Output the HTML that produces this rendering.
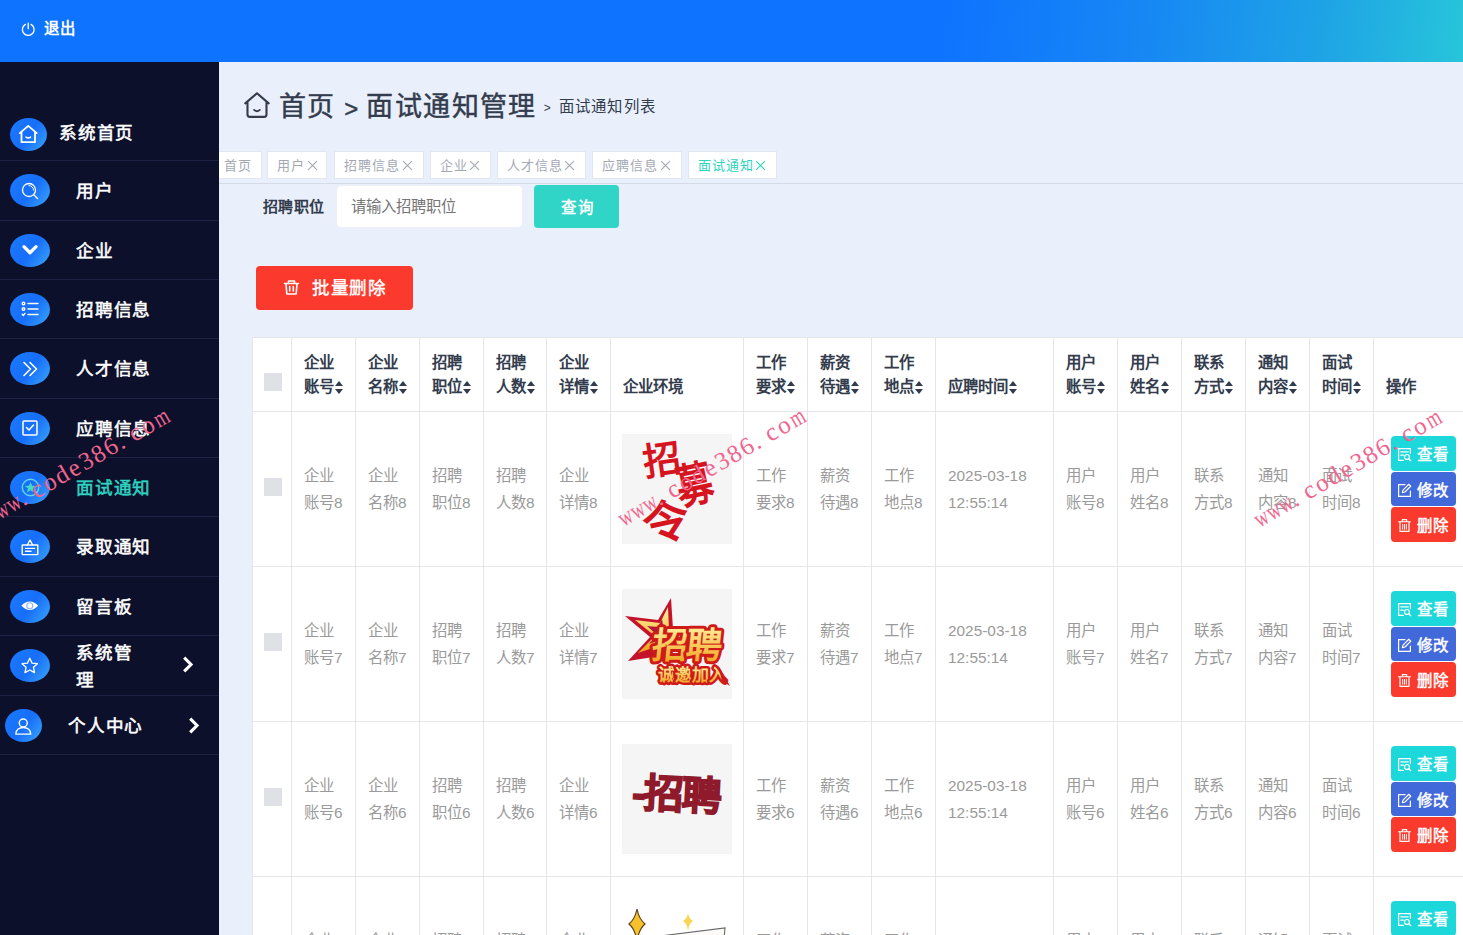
<!DOCTYPE html>
<html lang="zh-CN"><head><meta charset="utf-8"><title>面试通知管理</title>
<style>
*{box-sizing:border-box;margin:0;padding:0}
html,body{width:1463px;height:935px;overflow:hidden}
body{font-family:"Liberation Sans",sans-serif;background:#eaf0fb;color:#333c4d;position:relative}
.hdr{position:absolute;left:0;top:0;width:1463px;height:62px;background:linear-gradient(97deg,#0e73ff 0%,#0e73ff 64%,#1787f4 78%,#1ea3e6 90%,#27c5da 100%);}
.logout{position:absolute;left:22px;top:18px;color:#fff;font-size:15.4px;font-weight:bold;line-height:22px;letter-spacing:1px;display:flex;align-items:center}
.logout svg{margin-right:8px;margin-left:-1px}
.side{position:absolute;left:0;top:62px;width:219px;height:873px;background:#0c102b}
.mi{position:absolute;left:0;width:219px;height:59.33px;border-top:1px solid #1d2142;color:#fff;font-size:17.6px;font-weight:normal;-webkit-text-stroke:0.55px currentColor;letter-spacing:0.8px}
.mi .ic{position:absolute;left:10px;top:13px;width:40px;height:33px;border-radius:50%;background:linear-gradient(125deg,#1b7aff 0%,#176ef9 52%,#3ba6fb 100%);display:flex;align-items:center;justify-content:center}
.mi .tx{position:absolute;left:76px;top:1px;line-height:59px;white-space:nowrap}
.mi.on .tx{color:#2fd3c1}
.mi .ar{position:absolute;right:25px;top:21px}
.main{position:absolute;left:219px;top:62px;width:1244px;height:873px;background:#eaf0fb;overflow:hidden}
.bc{position:absolute;left:25px;top:25px;height:36px;display:flex;align-items:center;white-space:nowrap;color:#333c4d}
.bc .big{font-size:27px;letter-spacing:1.4px;line-height:36px;font-weight:normal;-webkit-text-stroke:0.45px currentColor;padding-top:4px}
.bc .sm{font-size:15.4px;letter-spacing:1.15px;margin-left:7px;padding-top:0}
.tabs{position:absolute;left:0;top:89px;height:28px;white-space:nowrap}
.tab{position:absolute;top:0;height:28px;background:#fff;border:1px solid #e2e6ee;color:#a3a8b3;font-size:13px;line-height:28px;letter-spacing:1px;padding:0 0 0 9px;white-space:nowrap}
.tab.on{color:#2fd3c1}
.tabline{position:absolute;left:0;top:121px;width:1244px;height:1px;background:#d5dbe8}
.lbl{position:absolute;left:44px;top:124px;height:42px;line-height:42px;font-size:15px;font-weight:bold;color:#333c4d;letter-spacing:0.3px}
.inp{position:absolute;left:117px;top:123px;width:187px;height:42.5px;border-radius:5px;background:#fff;border:1px solid #eef0f5;color:#757575;font-size:15.4px;line-height:41.5px;padding-left:13.5px}
.qbtn{position:absolute;left:314.5px;top:122.5px;width:85px;height:43.5px;border-radius:4px;background:#30d5c8;color:#fff;font-size:15.4px;line-height:45.5px;text-align:center;letter-spacing:2px;padding-left:3px;font-weight:normal;-webkit-text-stroke:0.5px #fff}
.del{position:absolute;left:37px;top:204px;width:157px;height:44px;border-radius:4px;background:#fb3a2d;color:#fff;font-size:17.6px;line-height:44px;letter-spacing:0.6px;display:flex;align-items:center;padding:0.6px 0 0 27px;-webkit-text-stroke:0.4px #fff}
.del svg{margin-right:12px;margin-top:-1px}
table{position:absolute;left:33px;top:275px;border-collapse:collapse;table-layout:fixed;background:#fff;width:1241px}
td,th{border:1px solid #e4e6e9;vertical-align:middle;text-align:left;padding:0 0 0 12px;overflow:hidden}
th{height:74px;font-size:15.4px;line-height:24.5px;color:#333c4d;font-weight:bold;vertical-align:bottom;padding-bottom:11.25px}
td{height:155px;font-size:15.4px;line-height:27px;color:#9a9a9a}
.cb{display:block;width:18px;height:18px;background:#dfe1e6;margin-left:0}
.srt{display:inline-block;width:9.8px;height:12.6px;vertical-align:-1.5px;position:relative;margin-left:0.5px}
.srt:before,.srt:after{content:"";position:absolute;left:0;border-left:4.9px solid transparent;border-right:4.9px solid transparent}
.srt:before{top:0;border-bottom:5.8px solid #333c4d}
.srt:after{bottom:0;border-top:5.8px solid #333c4d}
.img{display:block;width:110px;height:110px;background:#f5f5f5;position:relative;overflow:hidden}
.ab{display:flex;align-items:center;width:65px;height:34.4px;border-radius:4px;color:#fff;font-size:15.4px;font-weight:normal;-webkit-text-stroke:0.5px #fff;letter-spacing:0.8px;margin:0 0 1.1px 6px;padding:2.6px 0 0 6px;white-space:nowrap}
.ab svg{margin-right:5px;flex:none;width:15px;height:15px}
.b1{background:#1cd8da}.b2{background:#4169d9}.b3{background:#fa3a2d}
.wm{position:absolute;font-family:"Liberation Serif",serif;color:#f1668f;font-size:25px;line-height:30px;white-space:nowrap;transform-origin:0 50%;transform:rotate(-30deg);pointer-events:none}
.wm b{display:inline-block;width:14.15px;text-align:center;font-weight:normal}
.wm b.d{text-align:left;padding-left:1px}
.wm b.w{transform:scaleX(.74)}
</style></head><body>
<div class="hdr"><div class="logout"><svg width="14.5" height="14.5" viewBox="0 0 13 13" fill="none" stroke="#fff" stroke-width="1.2" stroke-linecap="round"><path d="M6.5 1 V6"/><path d="M4 2.2 A5.2 5.2 0 1 0 9 2.2"/></svg>退出</div></div>
<div class="side">
<div class="mi" style="top:40px;border-top:none"><span class="ic" style="left:10px;top:16px;width:37px;height:33px"><svg width="22.5" height="22.5" viewBox="0 0 20 20" fill="none" stroke="#fff" stroke-width="1.6" stroke-linejoin="round" stroke-linecap="round"><path d="M2.5 9 L10 2.5 L17.5 9 M4 8 V17 H16 V8"/><path d="M8 12.5 Q10 14 12 12.5" stroke-width="1.4"/></svg></span><span class="tx" style="left:59px;top:2px">系统首页</span></div>
<div class="mi" style="top:98.30px"><span class="ic"><svg width="20" height="20" viewBox="0 0 20 20" fill="none" stroke="#fff" stroke-width="1.3" stroke-linecap="round"><circle cx="9" cy="9" r="6.5"/><path d="M13.8 13.8 L17.5 17.5"/><path d="M9 4.5 A4.5 4.5 0 0 1 13.5 9" stroke-width="1"/></svg></span><span class="tx" style="left:76px">用户</span></div>
<div class="mi" style="top:157.63px"><span class="ic"><svg width="22" height="22" viewBox="0 0 20 20" fill="none" stroke="#fff" stroke-width="3" stroke-linecap="round" stroke-linejoin="round"><path d="M4.5 7 L10 12.5 L15.5 7"/></svg></span><span class="tx" style="left:76px">企业</span></div>
<div class="mi" style="top:216.96px"><span class="ic"><svg width="20" height="20" viewBox="0 0 20 20" fill="none" stroke="#fff" stroke-width="1.4" stroke-linecap="round"><circle cx="3.5" cy="4.5" r="1.3"/><circle cx="3.5" cy="10" r="1.3"/><path d="M2.2 15.3 L3.3 16.4 L5 14.4"/><path d="M8 4.5 H18 M8 10 H18 M8 15.5 H18"/></svg></span><span class="tx" style="left:76px">招聘信息</span></div>
<div class="mi" style="top:276.29px"><span class="ic"><svg width="20" height="20" viewBox="0 0 20 20" fill="none" stroke="#fff" stroke-width="1.6" stroke-linecap="round" stroke-linejoin="round"><path d="M4 3.5 L10.5 10 L4 16.5 M10 3.5 L16.5 10 L10 16.5"/></svg></span><span class="tx" style="left:76px">人才信息</span></div>
<div class="mi" style="top:335.62px"><span class="ic"><svg width="20" height="20" viewBox="0 0 20 20" fill="none" stroke="#fff" stroke-width="1.5" stroke-linecap="round" stroke-linejoin="round"><rect x="3" y="3" width="14" height="14" rx="1"/><path d="M6.5 9.5 L9 12 L13.5 7"/></svg></span><span class="tx" style="left:76px">应聘信息</span></div>
<div class="mi on" style="top:394.95px"><span class="ic"><svg width="21" height="21" viewBox="0 0 22 22" fill="none" stroke="#62d6e6" stroke-width="1.5"><circle cx="11" cy="11" r="8.6"/><path d="M11 5.2 L12.7 9.1 L16.9 9.4 L13.6 12.1 L14.7 16.2 L11 14 L7.3 16.2 L8.4 12.1 L5.1 9.4 L9.3 9.1 Z" fill="#3fdcc6" stroke="none"/></svg></span><span class="tx" style="left:76px">面试通知</span></div>
<div class="mi" style="top:454.28px"><span class="ic"><svg width="20" height="20" viewBox="0 0 20 20" fill="none" stroke="#fff" stroke-width="1.4" stroke-linecap="round" stroke-linejoin="round"><rect x="2.2" y="8" width="15.6" height="9.6" rx="0.5"/><path d="M7.3 8 L10 3.2 L12.7 8 M5.5 11.4 H14.5 M5.5 14.2 H11"/></svg></span><span class="tx" style="left:76px">录取通知</span></div>
<div class="mi" style="top:513.61px"><span class="ic"><svg width="19.5" height="19.5" viewBox="0 0 22 22"><path d="M1.5 11 Q11 1.5 20.5 11 Q11 20.5 1.5 11 Z" fill="#fff"/><circle cx="11" cy="11" r="3.4" fill="none" stroke="#8bb6f5" stroke-width="1.3"/></svg></span><span class="tx" style="left:76px">留言板</span></div>
<div class="mi" style="top:572.94px"><span class="ic"><svg width="19.5" height="19.5" viewBox="0 0 22 22" fill="none" stroke="#fff" stroke-width="1.5" stroke-linejoin="round"><path d="M11 2.5 L13.6 8 L19.6 8.7 L15.2 12.8 L16.4 18.8 L11 15.8 L5.6 18.8 L6.8 12.8 L2.4 8.7 L8.4 8 Z"/></svg></span><span class="tx" style="left:76px;line-height:27px;top:4px">系统管<br>理</span><svg class="ar" style="right:25px;top:20px" width="12" height="17" viewBox="0 0 12 17" fill="none" stroke="#fff" stroke-width="3.1" stroke-linecap="butt" stroke-linejoin="miter"><path d="M2.2 1.6 L9 8.5 L2.2 15.4"/></svg></div>
<div class="mi" style="top:633.27px"><span class="ic" style="left:5.4px;width:36.5px"><svg width="20.5" height="20.5" viewBox="0 0 22 22" fill="none" stroke="#fff" stroke-width="1.5" stroke-linecap="round"><circle cx="11" cy="7.5" r="4.3"/><path d="M3 19.5 C3 14.5 7 12.3 11 12.3 C15 12.3 19 14.5 19 19.5 Z" stroke-linejoin="round"/></svg></span><span class="tx" style="left:68px">个人中心</span><svg class="ar" style="right:19px" width="12" height="17" viewBox="0 0 12 17" fill="none" stroke="#fff" stroke-width="3.1" stroke-linecap="butt" stroke-linejoin="miter"><path d="M2.2 1.6 L9 8.5 L2.2 15.4"/></svg></div>
<div class="mi" style="top:691.60px;height:1px"></div>
</div>
<div class="main">
<div class="bc"><svg width="26.4" height="26.4" viewBox="0 0 25 25" fill="none" stroke="#333c4d" stroke-width="2" stroke-linejoin="round" stroke-linecap="round" style="margin-right:8.6px;margin-top:-0.2px;margin-left:0"><path d="M1.2 10.8 L12.3 1.2 L23.4 10.8 M3.3 9.6 V21.4 Q3.3 23.6 5.5 23.6 H19.1 Q21.3 23.6 21.3 21.4 V9.6"/><path d="M9.6 17 Q12.3 19.4 15 17" stroke-width="1.7"/></svg><span class="big">首页 <span style="font-size:24px;position:relative;top:1.5px;margin-left:-0.4px;margin-right:-2.3px">&gt;</span> 面试通知管理</span><span class="sm"><span style="font-size:12px;margin-right:7px">&gt;</span>面试通知列表</span></div>
<div class="tabs"><span class="tab" style="left:-5px;width:48px">首页</span><span class="tab" style="left:48.3px;width:60px">用户<svg width="11" height="11" viewBox="0 0 10 10" style="margin-left:1.5px;vertical-align:-1px" fill="none" stroke="currentColor" stroke-width="1"><path d="M1 1 L9 9 M9 1 L1 9"/></svg></span><span class="tab" style="left:115.3px;width:89.5px">招聘信息<svg width="11" height="11" viewBox="0 0 10 10" style="margin-left:1.5px;vertical-align:-1px" fill="none" stroke="currentColor" stroke-width="1"><path d="M1 1 L9 9 M9 1 L1 9"/></svg></span><span class="tab" style="left:210.5px;width:61px">企业<svg width="11" height="11" viewBox="0 0 10 10" style="margin-left:1.5px;vertical-align:-1px" fill="none" stroke="currentColor" stroke-width="1"><path d="M1 1 L9 9 M9 1 L1 9"/></svg></span><span class="tab" style="left:277.7px;width:89px">人才信息<svg width="11" height="11" viewBox="0 0 10 10" style="margin-left:1.5px;vertical-align:-1px" fill="none" stroke="currentColor" stroke-width="1"><path d="M1 1 L9 9 M9 1 L1 9"/></svg></span><span class="tab" style="left:373px;width:89.5px">应聘信息<svg width="11" height="11" viewBox="0 0 10 10" style="margin-left:1.5px;vertical-align:-1px" fill="none" stroke="currentColor" stroke-width="1"><path d="M1 1 L9 9 M9 1 L1 9"/></svg></span><span class="tab on" style="left:468.7px;width:89px">面试通知<svg width="11" height="11" viewBox="0 0 10 10" style="margin-left:1.5px;vertical-align:-1px" fill="none" stroke="currentColor" stroke-width="1"><path d="M1 1 L9 9 M9 1 L1 9"/></svg></span></div>
<div class="tabline"></div>
<div class="lbl">招聘职位</div><div class="inp">请输入招聘职位</div><div class="qbtn">查询</div>
<div class="del"><svg width="17" height="17" viewBox="0 0 17 17" fill="none" stroke="#fff" stroke-width="1.6" stroke-linecap="round" stroke-linejoin="round"><path d="M1.5 4.5 H15.5 M5.5 4.3 V2 H11.5 V4.3 M3 4.5 L3.8 15 H13.2 L14 4.5"/><path d="M6.7 7.5 V12 M10.3 7.5 V12"/></svg>批量删除</div>
<table><colgroup>
<col style="width:39px">
<col style="width:64px">
<col style="width:64px">
<col style="width:64px">
<col style="width:63px">
<col style="width:64px">
<col style="width:133px">
<col style="width:64px">
<col style="width:64px">
<col style="width:64px">
<col style="width:118px">
<col style="width:64px">
<col style="width:64px">
<col style="width:64px">
<col style="width:64px">
<col style="width:64px">
<col style="width:120px">
</colgroup><tr>
<th style="padding-left:11px;padding-bottom:20.5px"><span class="cb"></span></th>
<th>企业<br>账号<i class="srt"></i></th>
<th>企业<br>名称<i class="srt"></i></th>
<th>招聘<br>职位<i class="srt"></i></th>
<th>招聘<br>人数<i class="srt"></i></th>
<th>企业<br>详情<i class="srt"></i></th>
<th>企业环境</th>
<th>工作<br>要求<i class="srt"></i></th>
<th>薪资<br>待遇<i class="srt"></i></th>
<th>工作<br>地点<i class="srt"></i></th>
<th>应聘时间<i class="srt"></i></th>
<th>用户<br>账号<i class="srt"></i></th>
<th>用户<br>姓名<i class="srt"></i></th>
<th>联系<br>方式<i class="srt"></i></th>
<th>通知<br>内容<i class="srt"></i></th>
<th>面试<br>时间<i class="srt"></i></th>
<th>操作</th>
</tr>
<tr><td style="padding-left:11px;padding-bottom:4px"><span class="cb"></span></td><td>企业<br>账号8</td><td>企业<br>名称8</td><td>招聘<br>职位8</td><td>招聘<br>人数8</td><td>企业<br>详情8</td><td style="padding-left:11px"><span class="img"><svg width="110" height="110" viewBox="0 0 110 110"><rect width="110" height="110" fill="#f5f5f5"/><g fill="#d5141f" font-family="Liberation Sans,sans-serif" font-weight="bold"><text x="21" y="40" font-size="38" transform="rotate(-8 40 24)">招</text><text x="0" y="0" font-size="40" transform="translate(73 51) rotate(-12) scale(0.92 1.18) translate(-20 14)">募</text><text x="20" y="104" font-size="46" transform="rotate(-12 44 84)">令</text></g></svg></span></td><td>工作<br>要求8</td><td>薪资<br>待遇8</td><td>工作<br>地点8</td><td>2025-03-18<br>12:55:14</td><td>用户<br>账号8</td><td>用户<br>姓名8</td><td>联系<br>方式8</td><td>通知<br>内容8</td><td>面试<br>时间8</td><td style="padding-left:11px"><span class="ab b1"><svg width="14" height="14" viewBox="0 0 14 14" fill="none" stroke="#fff" stroke-width="1.15" stroke-linecap="round"><path d="M12.5 6 V1.5 H1.5 V12.5 H6"/><path d="M3.5 4.5 H10.5 M3.5 7.5 H6"/><circle cx="9.3" cy="9.3" r="2.3"/><path d="M11 11 L12.8 12.8"/></svg>查看</span><span class="ab b2"><svg width="14" height="14" viewBox="0 0 14 14" fill="none" stroke="#fff" stroke-width="1.1" stroke-linecap="round" stroke-linejoin="round"><path d="M12.5 7.5 V12.5 H1.5 V1.5 H7.5"/><path d="M5 9 L5.6 6.6 L11 1.2 L12.8 3 L7.4 8.4 Z"/></svg>修改</span><span class="ab b3" style="margin-bottom:0"><svg width="14" height="14" viewBox="0 0 14 14" fill="none" stroke="#fff" stroke-width="1.1" stroke-linecap="round" stroke-linejoin="round"><path d="M1.5 3.5 H12.5 M5 3.3 V1.5 H9 V3.3 M2.8 3.5 V12.5 H11.2 V3.5"/><path d="M5.3 6 V10.5 M7 6 V10.5 M8.7 6 V10.5" stroke-width="0.9"/></svg>删除</span></td></tr>
<tr><td style="padding-left:11px;padding-bottom:4px"><span class="cb"></span></td><td>企业<br>账号7</td><td>企业<br>名称7</td><td>招聘<br>职位7</td><td>招聘<br>人数7</td><td>企业<br>详情7</td><td style="padding-left:11px"><span class="img"><svg width="110" height="110" viewBox="0 0 110 110"><defs><linearGradient id="g7" x1="0" y1="0" x2="0" y2="1"><stop offset="0" stop-color="#fff3a0"/><stop offset="1" stop-color="#f0a018"/></linearGradient></defs><rect width="110" height="110" fill="#f5f5f5"/><path d="M49 9 L51 40 L76 44 L52 58 L44 66 L6 72 L28 48 L3 27 L36 31 Z" fill="#c4122a"/><path d="M46 18 L47 41 L64 45 L45 54 L16 64 L33 47 L13 31 L38 34 Z" fill="url(#g7)"/><path d="M40 30 L42 42 L52 45 L40 50 L27 55 L35 46 L25 37 L36 38 Z" fill="#b01a3a"/><g font-family="Liberation Sans,sans-serif" font-weight="bold" fill="url(#g7)" stroke="#cf1a1a" stroke-linejoin="round" style="paint-order:stroke"><text x="36" y="69" font-size="36" textLength="70" stroke-width="6" transform="skewX(-6)">招聘</text><text x="36" y="92" font-size="17" textLength="68" stroke-width="5">诚邀加入</text></g><path d="M96 76 L108 97 L100 92 Z" fill="#cf1a1a"/></svg></span></td><td>工作<br>要求7</td><td>薪资<br>待遇7</td><td>工作<br>地点7</td><td>2025-03-18<br>12:55:14</td><td>用户<br>账号7</td><td>用户<br>姓名7</td><td>联系<br>方式7</td><td>通知<br>内容7</td><td>面试<br>时间7</td><td style="padding-left:11px"><span class="ab b1"><svg width="14" height="14" viewBox="0 0 14 14" fill="none" stroke="#fff" stroke-width="1.15" stroke-linecap="round"><path d="M12.5 6 V1.5 H1.5 V12.5 H6"/><path d="M3.5 4.5 H10.5 M3.5 7.5 H6"/><circle cx="9.3" cy="9.3" r="2.3"/><path d="M11 11 L12.8 12.8"/></svg>查看</span><span class="ab b2"><svg width="14" height="14" viewBox="0 0 14 14" fill="none" stroke="#fff" stroke-width="1.1" stroke-linecap="round" stroke-linejoin="round"><path d="M12.5 7.5 V12.5 H1.5 V1.5 H7.5"/><path d="M5 9 L5.6 6.6 L11 1.2 L12.8 3 L7.4 8.4 Z"/></svg>修改</span><span class="ab b3" style="margin-bottom:0"><svg width="14" height="14" viewBox="0 0 14 14" fill="none" stroke="#fff" stroke-width="1.1" stroke-linecap="round" stroke-linejoin="round"><path d="M1.5 3.5 H12.5 M5 3.3 V1.5 H9 V3.3 M2.8 3.5 V12.5 H11.2 V3.5"/><path d="M5.3 6 V10.5 M7 6 V10.5 M8.7 6 V10.5" stroke-width="0.9"/></svg>删除</span></td></tr>
<tr><td style="padding-left:11px;padding-bottom:4px"><span class="cb"></span></td><td>企业<br>账号6</td><td>企业<br>名称6</td><td>招聘<br>职位6</td><td>招聘<br>人数6</td><td>企业<br>详情6</td><td style="padding-left:11px"><span class="img"><svg width="110" height="110" viewBox="0 0 110 110"><rect width="110" height="110" fill="#f5f5f5"/><g font-family="Liberation Sans,sans-serif" font-weight="900" fill="#8e1a2c" stroke="#8e1a2c" stroke-width="1.6"><text x="10" y="65" font-size="40" textLength="90" transform="rotate(3 55 55)">-招聘</text></g></svg></span></td><td>工作<br>要求6</td><td>薪资<br>待遇6</td><td>工作<br>地点6</td><td>2025-03-18<br>12:55:14</td><td>用户<br>账号6</td><td>用户<br>姓名6</td><td>联系<br>方式6</td><td>通知<br>内容6</td><td>面试<br>时间6</td><td style="padding-left:11px"><span class="ab b1"><svg width="14" height="14" viewBox="0 0 14 14" fill="none" stroke="#fff" stroke-width="1.15" stroke-linecap="round"><path d="M12.5 6 V1.5 H1.5 V12.5 H6"/><path d="M3.5 4.5 H10.5 M3.5 7.5 H6"/><circle cx="9.3" cy="9.3" r="2.3"/><path d="M11 11 L12.8 12.8"/></svg>查看</span><span class="ab b2"><svg width="14" height="14" viewBox="0 0 14 14" fill="none" stroke="#fff" stroke-width="1.1" stroke-linecap="round" stroke-linejoin="round"><path d="M12.5 7.5 V12.5 H1.5 V1.5 H7.5"/><path d="M5 9 L5.6 6.6 L11 1.2 L12.8 3 L7.4 8.4 Z"/></svg>修改</span><span class="ab b3" style="margin-bottom:0"><svg width="14" height="14" viewBox="0 0 14 14" fill="none" stroke="#fff" stroke-width="1.1" stroke-linecap="round" stroke-linejoin="round"><path d="M1.5 3.5 H12.5 M5 3.3 V1.5 H9 V3.3 M2.8 3.5 V12.5 H11.2 V3.5"/><path d="M5.3 6 V10.5 M7 6 V10.5 M8.7 6 V10.5" stroke-width="0.9"/></svg>删除</span></td></tr>
<tr><td style="padding-left:11px;padding-bottom:4px"><span class="cb"></span></td><td>企业<br>账号5</td><td>企业<br>名称5</td><td>招聘<br>职位5</td><td>招聘<br>人数5</td><td>企业<br>详情5</td><td style="padding-left:11px"><span class="img" style="background:none"><svg width="110" height="110" viewBox="0 -6 110 110"><path d="M15 4 Q17 14 23 19 Q17 24 15 36 Q13 24 7 19 Q13 14 15 4 Z" fill="#f6c12a" stroke="#5a4320" stroke-width="1.2"/><path d="M66 8 Q67 14 71 16 Q67 18 66 26 Q65 18 61 16 Q65 14 66 8 Z" fill="#f8d552"/><path d="M42 30.5 L103 23 L100 56" fill="#fbfaf6" stroke="#666" stroke-width="1.1"/></svg></span></td><td>工作<br>要求5</td><td>薪资<br>待遇5</td><td>工作<br>地点5</td><td>2025-03-18<br>12:55:14</td><td>用户<br>账号5</td><td>用户<br>姓名5</td><td>联系<br>方式5</td><td>通知<br>内容5</td><td>面试<br>时间5</td><td style="padding-left:11px"><span class="ab b1"><svg width="14" height="14" viewBox="0 0 14 14" fill="none" stroke="#fff" stroke-width="1.15" stroke-linecap="round"><path d="M12.5 6 V1.5 H1.5 V12.5 H6"/><path d="M3.5 4.5 H10.5 M3.5 7.5 H6"/><circle cx="9.3" cy="9.3" r="2.3"/><path d="M11 11 L12.8 12.8"/></svg>查看</span><span class="ab b2"><svg width="14" height="14" viewBox="0 0 14 14" fill="none" stroke="#fff" stroke-width="1.1" stroke-linecap="round" stroke-linejoin="round"><path d="M12.5 7.5 V12.5 H1.5 V1.5 H7.5"/><path d="M5 9 L5.6 6.6 L11 1.2 L12.8 3 L7.4 8.4 Z"/></svg>修改</span><span class="ab b3" style="margin-bottom:0"><svg width="14" height="14" viewBox="0 0 14 14" fill="none" stroke="#fff" stroke-width="1.1" stroke-linecap="round" stroke-linejoin="round"><path d="M1.5 3.5 H12.5 M5 3.3 V1.5 H9 V3.3 M2.8 3.5 V12.5 H11.2 V3.5"/><path d="M5.3 6 V10.5 M7 6 V10.5 M8.7 6 V10.5" stroke-width="0.9"/></svg>删除</span></td></tr>
</table>
</div>
<div class="wm" style="left:-18.4px;top:506.3px"><b class="w">w</b><b class="w">w</b><b class="w">w</b><b class="d">.</b><b>c</b><b>o</b><b>d</b><b>e</b><b>3</b><b>8</b><b>6</b><b class="d">.</b><b>c</b><b>o</b><b class="w">m</b></div><div class="wm" style="left:618.4px;top:506.2px"><b class="w">w</b><b class="w">w</b><b class="w">w</b><b class="d">.</b><b>c</b><b>o</b><b>d</b><b>e</b><b>3</b><b>8</b><b>6</b><b class="d">.</b><b>c</b><b>o</b><b class="w">m</b></div><div class="wm" style="left:1254px;top:506.5px"><b class="w">w</b><b class="w">w</b><b class="w">w</b><b class="d">.</b><b>c</b><b>o</b><b>d</b><b>e</b><b>3</b><b>8</b><b>6</b><b class="d">.</b><b>c</b><b>o</b><b class="w">m</b></div>
</body></html>
